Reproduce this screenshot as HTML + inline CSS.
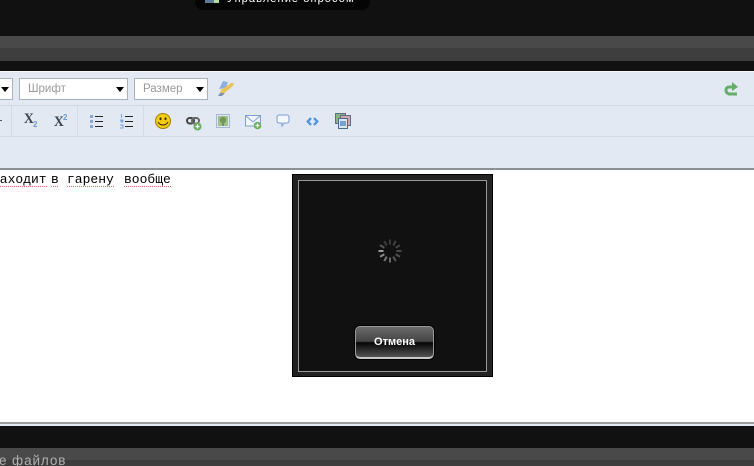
<!DOCTYPE html>
<html><head><meta charset="utf-8">
<style>
html,body{margin:0;padding:0;background:#111;}
#p{position:relative;width:754px;height:466px;overflow:hidden;background:#111;font-family:"Liberation Sans",sans-serif;}
.a{position:absolute;}
.dd{position:absolute;top:78px;height:20px;background:#fff;border:1px solid #a9b2bd;font-size:11.5px;color:#999;line-height:21px;}
.dd span{position:absolute;left:8px;top:0;}
.dd i{position:absolute;right:3px;top:8px;width:0;height:0;border-left:4px solid transparent;border-right:4px solid transparent;border-top:5px solid #000;}
.sep{position:absolute;top:106px;width:1px;height:30px;background:#d2dbe6;}
.w{position:absolute;top:172px;font:13px/16px "Liberation Mono",monospace;color:#000;white-space:pre;height:16px;background:repeating-linear-gradient(90deg,#e06a6a 0 1px,transparent 1px 2px) 0 14px/100% 1px no-repeat;}
svg{position:absolute;}
</style></head><body><div id="p">
<div class="a" style="left:195px;top:-10px;width:175px;height:20px;background:#050505;border-radius:8px;"></div>
<div class="a" style="left:227px;top:-7px;font-size:11px;line-height:12px;color:#fff;letter-spacing:1.1px;white-space:nowrap;">Управление опросом</div>
<div class="a" style="left:205px;top:0;width:9px;height:3px;background:#5a7c9a;"></div>
<div class="a" style="left:214px;top:0;width:5px;height:3px;background:#b9d99a;"></div>

<div class="a" style="left:0;top:36px;width:754px;height:12px;background:#494949;"></div>
<div class="a" style="left:0;top:48px;width:754px;height:13px;background:#3e3e3e;"></div>

<div class="a" style="left:0;top:71px;width:754px;height:98px;background:#e3e9f2;border-top:1px solid #f4f7fb;box-sizing:border-box;"></div>
<div class="a" style="left:0;top:105px;width:754px;height:1px;background:#cfd8e4;"></div>
<div class="a" style="left:0;top:136px;width:754px;height:1px;background:#d2dbe6;"></div>
<div class="a" style="left:0;top:168px;width:754px;height:2px;background:#8d9092;"></div>

<div class="dd" style="left:-10px;width:21px;"><i></i></div>
<div class="dd" style="left:19px;width:107px;"><span>Шрифт</span><i></i></div>
<div class="dd" style="left:134px;width:72px;"><span>Размер</span><i></i></div>

<svg style="left:217px;top:80px" width="18" height="18" viewBox="0 0 18 18"><path d="M6 1l5 1-2 6-7 1z" fill="#8fb0de"/><path d="M3 13l1-3L14 3l3 0-1 3L6 14z" fill="#e8c35a"/><path d="M1 16l2-3h5l-3 3z" fill="#7d93b5"/></svg>

<svg style="left:723px;top:81px" width="16" height="16" viewBox="0 0 16 16"><path d="M10 6H6C2 6 2 12 6 13h8" fill="none" stroke="#64ad68" stroke-width="3"/><path d="M9 1l6 5-6 4z" fill="#64ad68"/></svg>

<div class="sep" style="left:11px"></div>
<div class="sep" style="left:77px"></div>
<div class="sep" style="left:143px"></div>
<div class="a" style="left:-2px;top:120px;width:4px;height:1px;background:#555;"></div>

<div class="a" style="left:24px;top:111px;font:bold 15px/16px 'Liberation Serif',serif;color:#3a4450;transform:scaleX(.9);transform-origin:0 0;">X</div>
<div class="a" style="left:33px;top:120px;font:bold 8px/10px 'Liberation Sans',sans-serif;color:#6f9bd1;">2</div>
<div class="a" style="left:54px;top:114px;font:bold 15px/16px 'Liberation Serif',serif;color:#3a4450;transform:scaleX(.9);transform-origin:0 0;">X</div>
<div class="a" style="left:63px;top:113px;font:bold 8px/10px 'Liberation Sans',sans-serif;color:#6f9bd1;">2</div>

<svg style="left:89px;top:114px" width="15" height="15" viewBox="0 0 15 15"><path d="M1 1h3v3H1zM1 6h3v3H1zM1 11h3v3H1z" fill="#8aa6d6"/><path d="M6 2.500h8M6 7.500h8M6 12.500h8" stroke="#222" stroke-width="1"/></svg>
<svg style="left:119px;top:114px" width="15" height="15" viewBox="0 0 15 15"><path d="M2.500 0v4M1 6h3v1H2v1h2M1 11h3v3H1" stroke="#7aa3d8" stroke-width="1" fill="none"/><path d="M6 2.500h8M6 7.500h8M6 12.500h8" stroke="#222" stroke-width="1"/></svg>

<svg style="left:155px;top:113px" width="16" height="16" viewBox="0 0 16 16"><circle cx="8" cy="8" r="7.500" fill="#f5cc10" stroke="#9c7e08" stroke-width="1"/><ellipse cx="5.500" cy="5.800" rx="1" ry="1.400" fill="#332a00"/><ellipse cx="10.500" cy="5.800" rx="1" ry="1.400" fill="#332a00"/><path d="M3 9c2 4 8 4 10 0" stroke="#332a00" fill="none"/></svg>

<svg style="left:186px;top:116px" width="16" height="15" viewBox="0 0 16 15"><rect x="1" y="2" width="7" height="5.500" rx="2.700" fill="none" stroke="#444" stroke-width="2"/><rect x="6" y="2" width="7" height="5.500" rx="2.700" fill="none" stroke="#666" stroke-width="2"/><circle cx="11.500" cy="10.500" r="4" fill="#6aad62"/><path d="M9.500 10.500h4M11.500 8.500v4" stroke="#fff" stroke-width="1.200"/></svg>

<svg style="left:216px;top:114px" width="14" height="14" viewBox="0 0 14 14"><rect x=".5" y=".5" width="13" height="13" fill="#e1e9f2" stroke="#a6b8d0"/><rect x="2" y="2" width="10" height="10" fill="#9fc08a"/><circle cx="7" cy="6" r="3.200" fill="#6e9a55"/><path d="M6 8h2v4H6z" fill="#6e9a55"/></svg>

<svg style="left:245px;top:115px" width="17" height="15" viewBox="0 0 17 15"><rect x=".5" y=".5" width="15" height="10.500" fill="#f1f5fa" stroke="#7f9fd0"/><path d="M1 1l7 6 7-6" fill="none" stroke="#7f9fd0"/><circle cx="12.500" cy="10.500" r="3.800" fill="#6aad62"/><path d="M10.500 10.500h4M12.500 8.500v4" stroke="#fff" stroke-width="1.200"/></svg>

<svg style="left:276px;top:114px" width="14" height="14" viewBox="0 0 14 14"><path d="M3 1h8a2 2 0 0 1 2 2v4a2 2 0 0 1-2 2H8l-2 3V9H3a2 2 0 0 1-2-2V3a2 2 0 0 1 2-2z" fill="#f3f6fa" stroke="#7a9bcc"/></svg>

<svg style="left:306px;top:117px" width="13" height="9" viewBox="0 0 13 9"><path d="M5 1L1.800 4.500 5 8M8 1l3.200 3.500L8 8" fill="none" stroke="#4f95e0" stroke-width="2.400"/></svg>

<svg style="left:335px;top:113px" width="16" height="16" viewBox="0 0 16 16"><rect x=".5" y=".5" width="10" height="10" fill="#8bb486" stroke="#5b6f86"/><rect x="5.500" y="2.500" width="10" height="10" fill="#d6a3b0" stroke="#5b6f86"/><rect x="3.500" y="5.500" width="9" height="10" fill="#dbe6f2" stroke="#4d6b8c"/><rect x="5" y="8" width="6" height="5" fill="#6fa5d6"/></svg>

<div class="a" style="left:0;top:170px;width:754px;height:252px;background:#fff;"></div>
<div class="w" style="left:-8px;">находит</div>
<div class="w" style="left:51px;">в</div>
<div class="w" style="left:67px;">гарену</div>
<div class="w" style="left:124px;">вообще</div>

<div class="a" style="left:292px;top:174px;width:201px;height:203px;background:#111;border:1px solid #000;box-sizing:border-box;"></div>
<div class="a" style="left:293px;top:175px;width:199px;height:201px;border:5px solid #222;box-sizing:border-box;"></div>
<div class="a" style="left:298px;top:180px;width:189px;height:192px;border:1px solid #9a9a9a;box-sizing:border-box;"></div>

<svg style="left:378px;top:239px" width="24" height="24" viewBox="0 0 24 24" stroke-width="2" stroke-linecap="butt">
<g transform="translate(12 12)">
<path d="M0-11.500V-6.500" stroke="#3a3a3a"/>
<path d="M0-11.500V-6.500" stroke="#444" transform="rotate(30)"/>
<path d="M0-11.500V-6.500" stroke="#444" transform="rotate(60)"/>
<path d="M0-11.500V-6.500" stroke="#4a4a4a" transform="rotate(90)"/>
<path d="M0-11.500V-6.500" stroke="#505050" transform="rotate(120)"/>
<path d="M0-11.500V-6.500" stroke="#585858" transform="rotate(150)"/>
<path d="M0-11.500V-6.500" stroke="#666" transform="rotate(180)"/>
<path d="M0-11.500V-6.500" stroke="#777" transform="rotate(210)"/>
<path d="M0-11.500V-6.500" stroke="#8a8a8a" transform="rotate(240)"/>
<path d="M0-11.500V-6.500" stroke="#9c9c9c" transform="rotate(270)"/>
<path d="M0-11.500V-6.500" stroke="#555" transform="rotate(300)"/>
<path d="M0-11.500V-6.500" stroke="#3c3c3c" transform="rotate(330)"/>
</g></svg>

<div class="a" style="left:355px;top:326px;width:79px;height:33px;box-sizing:border-box;border:1px solid #9a9a9a;border-bottom:2px solid #c8c8c8;border-radius:5px;background:linear-gradient(#6a6a6a 0,#454545 48%,#050505 52%,#2a2a2a 75%,#555 100%);box-shadow:0 0 0 1px #000;color:#fff;font:bold 11px/31px 'Liberation Sans',sans-serif;text-align:center;">Отмена</div>

<div class="a" style="left:0;top:422px;width:754px;height:2px;background:#9a9c9e;"></div>
<div class="a" style="left:0;top:424px;width:754px;height:2px;background:#e3e9f2;"></div>
<div class="a" style="left:0;top:448px;width:754px;height:12px;background:#494949;"></div>
<div class="a" style="left:0;top:460px;width:754px;height:6px;background:#3e3e3e;"></div>
<div class="a" style="left:-1px;top:453px;font-size:13.5px;line-height:16px;color:#b0b0b0;letter-spacing:.9px;white-space:nowrap;">е файлов</div>
</div></body></html>
